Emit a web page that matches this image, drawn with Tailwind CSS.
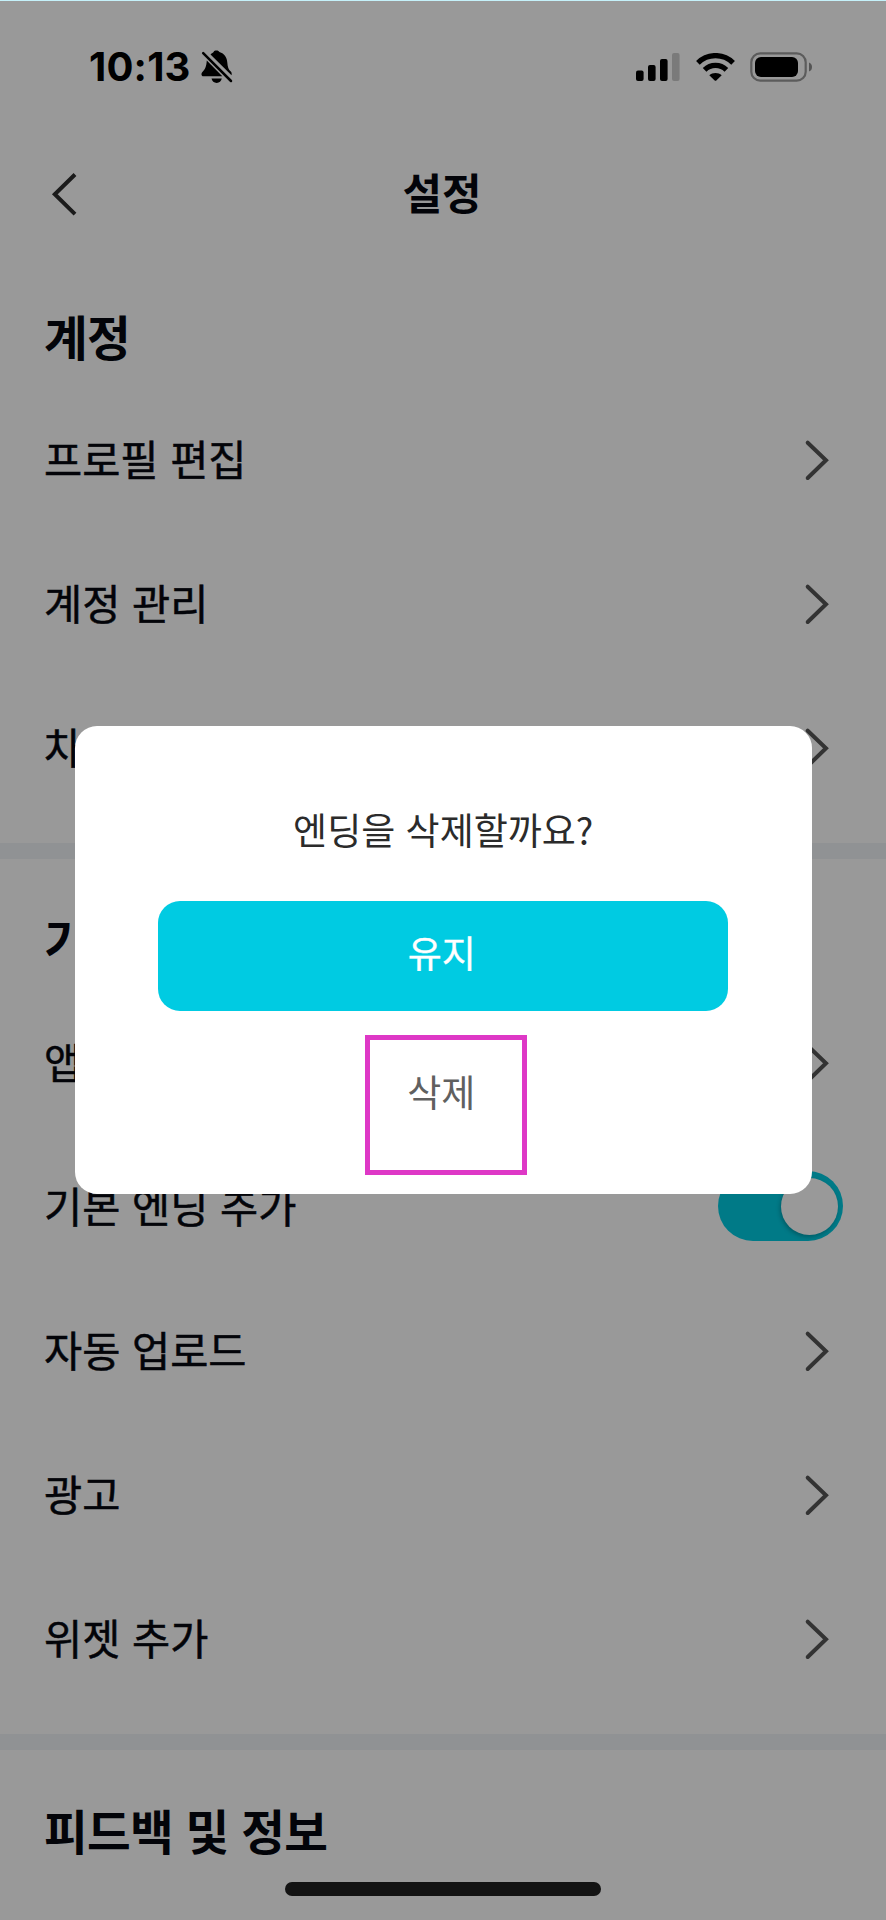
<!DOCTYPE html>
<html lang="ko">
<head>
<meta charset="utf-8">
<meta name="viewport" content="width=device-width">
<title>설정</title>
<script src="https://cdn.jsdelivr.net/npm/@tailwindcss/browser@4"></script>
</head>
<body class="bg-white">
<div class="relative h-[1920px] w-[886px] overflow-hidden bg-white font-['Noto_Sans_CJK_KR',sans-serif] text-[#05080f]">
  <!-- Status bar -->
  <div class="flex h-[133px] items-center pl-[89px] pr-[73px] text-black">
    <span class="font-['Inter',sans-serif] text-[40px] leading-none font-bold tracking-[0.2px]">10:13</span>
    <svg class="ml-[10px] h-[34px] w-[32px]" viewBox="0 0 32 34">
      <path d="M9.5 4.500C11 3 12 2.600 12.600 2C13 .8 14 .4 15.500 .4C17 .4 18 .9 18.400 2C23.500 3.500 26 7.500 26.300 12.500C26.600 17 27.500 19.500 29.800 21.600C30.500 22.300 31 23.500 30.500 25.200Z"/>
      <path d="M5.800 10.500L21.300 26.300H2.500C.3 26.300 -.2 23.700 1.400 22C4 19.300 5.300 17 5.800 10.500Z"/>
      <path d="M10.500 28.600H20.800C20.200 31.400 18.300 33 15.700 33C13 33 11 31.400 10.500 28.600Z"/>
      <path d="M2.200 3.200L30 31" stroke="currentColor" stroke-width="2.500" stroke-linecap="round"/>
    </svg>
    <div class="ml-auto flex items-center">
      <svg class="h-[28px] w-[44px]" viewBox="0 0 44 28">
        <rect x="0" y="17.500" width="7.600" height="10.500" rx="2"/>
        <rect x="12" y="12" width="7.600" height="16" rx="2"/>
        <rect x="24" y="6" width="7.600" height="22" rx="2"/>
        <rect x="36" y="0" width="7.600" height="28" rx="2" opacity=".2"/>
      </svg>
      <svg class="ml-[16px] h-[28px] w-[39px]" viewBox="0 0 39 28">
        <path d="M1.900 9.800A25 25 0 0 1 37.100 9.800" fill="none" stroke="currentColor" stroke-width="5.200"/>
        <path d="M8.600 16.800A15.500 15.500 0 0 1 30.400 16.800" fill="none" stroke="currentColor" stroke-width="5.200"/>
        <path d="M13.300 22.200C16.500 19.300 22.500 19.300 25.700 22.200L20.300 27.400Q19.500 28.100 18.700 27.400Z"/>
      </svg>
      <svg class="ml-[15px] h-[30px] w-[63px]" viewBox="0 0 63 30">
        <rect x="1.300" y="1.300" width="54.400" height="27.400" rx="9" fill="none" stroke="currentColor" stroke-width="2.200" opacity=".4"/>
        <rect x="5" y="5" width="43" height="20" rx="6"/>
        <path d="M59 10.500Q62 11.500 62 15T59 19.500Z" opacity=".45"/>
      </svg>
    </div>
  </div>

  <!-- Navigation bar -->
  <header class="grid h-[122.5px] grid-cols-[120px_1fr_120px] items-center">
    <svg class="ml-[50px] h-[44px] w-[28px]" viewBox="0 0 28 44" fill="none" stroke="#2d2d2d" stroke-width="4"><path d="M25 2.500L4.800 22.300L25 42.100"/></svg>
    <h1 class="pr-[2px] pb-[6px] text-center text-[43px] leading-none font-bold">설정</h1>
  </header>

  <main>
    <section class="flex flex-col border-b-[16.5px] border-[#f0f3f7] pb-[22.500px]">
      <h2 class="flex h-[132.5px] items-center pt-[27px] pl-[44px] text-[47.5px] leading-none font-bold tracking-[-0.7px]">계정</h2>
      <div class="flex h-[144px] items-center justify-between pr-[56px] pl-[44px] text-[41.5px] leading-none"><span class="pb-[3px] [-webkit-text-stroke:0.5px]">프로필 편집</span><svg class="h-[42px] w-[26px]" viewBox="0 0 26 42" fill="none" stroke="#555" stroke-width="4" stroke-linecap="round"><path d="M3.700 3.700L22 21.300L3.700 39"/></svg></div>
      <div class="flex h-[144px] items-center justify-between pr-[56px] pl-[44px] text-[41.5px] leading-none"><span class="pb-[3px] [-webkit-text-stroke:0.5px]">계정 관리</span><svg class="h-[42px] w-[26px]" viewBox="0 0 26 42" fill="none" stroke="#555" stroke-width="4" stroke-linecap="round"><path d="M3.700 3.700L22 21.300L3.700 39"/></svg></div>
      <div class="flex h-[144px] items-center justify-between pr-[56px] pl-[44px] text-[41.5px] leading-none"><span class="pb-[3px] [-webkit-text-stroke:0.5px]">차</span><svg class="h-[42px] w-[26px]" viewBox="0 0 26 42" fill="none" stroke="#555" stroke-width="4" stroke-linecap="round"><path d="M3.700 3.700L22 21.300L3.700 39"/></svg></div>
    </section>

    <section class="flex flex-col border-b-[16.5px] border-[#f0f3f7] pb-[22.500px]">
      <h2 class="flex h-[132.5px] items-center pt-[27px] pl-[44px] text-[47.5px] leading-none font-bold tracking-[-0.7px]">기</h2>
      <div class="flex h-[144px] items-center justify-between pr-[56px] pl-[44px] text-[41.5px] leading-none"><span class="pb-[3px] [-webkit-text-stroke:0.5px]">앱</span><svg class="h-[42px] w-[26px]" viewBox="0 0 26 42" fill="none" stroke="#555" stroke-width="4" stroke-linecap="round"><path d="M3.700 3.700L22 21.300L3.700 39"/></svg></div>
      <div class="flex h-[144px] items-center justify-between pr-[43px] pl-[44px] text-[41.5px] leading-none"><span class="pb-[3px] [-webkit-text-stroke:0.5px]">기본 엔딩 추가</span>
        <span class="mb-[2px] flex h-[70px] w-[125px] items-center justify-end rounded-full bg-[#00cbe1] pr-[5.500px]"><span class="size-[57px] rounded-full bg-white shadow-[-1px_2px_4px_rgba(0,0,0,0.25)]"></span></span></div>
      <div class="flex h-[144px] items-center justify-between pr-[56px] pl-[44px] text-[41.5px] leading-none"><span class="pb-[3px] [-webkit-text-stroke:0.5px]">자동 업로드</span><svg class="h-[42px] w-[26px]" viewBox="0 0 26 42" fill="none" stroke="#555" stroke-width="4" stroke-linecap="round"><path d="M3.700 3.700L22 21.300L3.700 39"/></svg></div>
      <div class="flex h-[144px] items-center justify-between pr-[56px] pl-[44px] text-[41.5px] leading-none"><span class="pb-[3px] [-webkit-text-stroke:0.5px]">광고</span><svg class="h-[42px] w-[26px]" viewBox="0 0 26 42" fill="none" stroke="#555" stroke-width="4" stroke-linecap="round"><path d="M3.700 3.700L22 21.300L3.700 39"/></svg></div>
      <div class="flex h-[144px] items-center justify-between pr-[56px] pl-[44px] text-[41.5px] leading-none"><span class="pb-[3px] [-webkit-text-stroke:0.5px]">위젯 추가</span><svg class="h-[42px] w-[26px]" viewBox="0 0 26 42" fill="none" stroke="#555" stroke-width="4" stroke-linecap="round"><path d="M3.700 3.700L22 21.300L3.700 39"/></svg></div>
    </section>

    <section>
      <h2 class="flex h-[132.5px] items-center pt-[27px] pl-[44px] text-[47.5px] leading-none font-bold tracking-[-0.7px]">피드백 및 정보</h2>
      <div class="mx-auto h-[14px] w-[316px] rounded-full bg-[#202020]"></div>
    </section>
  </main>

  <!-- Dimmed backdrop with the confirmation dialog -->
  <div class="absolute inset-0 border-t border-[#c5f1fa] bg-black/40 bg-clip-padding">
    <div role="dialog" class="mt-[725px] ml-[75px] flex h-[467.5px] w-[736.5px] flex-col items-center rounded-[22px] bg-white">
      <p class="mt-[84px] text-[37px] leading-[38px] text-[#2b2b2b]">엔딩을 삭제할까요?</p>
      <button class="mt-[52.5px] flex h-[110px] w-[570px] items-center justify-center rounded-[22px] bg-[#00cbe2] pr-[3px] pb-[6px] text-[37px] leading-none text-white [-webkit-text-stroke:0.3px]">유지</button>
      <button class="mt-[24px] ml-[5px] h-[140.5px] w-[161.5px] border-[5px] border-[#de38c6] pr-[9px] pb-[27px] text-[37px] leading-none text-[#606060]">삭제</button>
    </div>
  </div>
</div>
</body>
</html>
